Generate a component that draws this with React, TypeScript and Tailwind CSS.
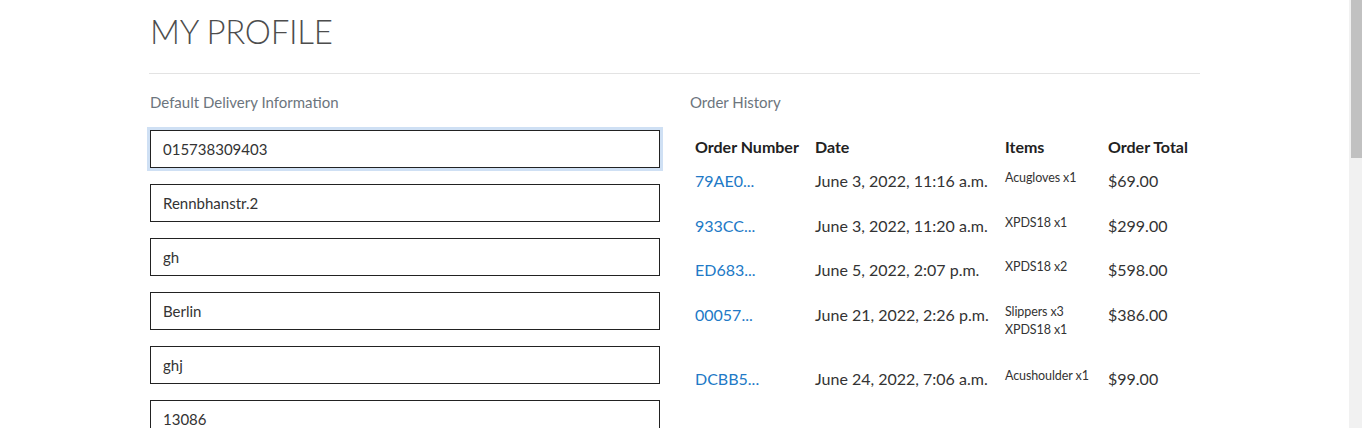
const orders = [
  { id: '79AE0...', date: 'June 3, 2022, 11:16 a.m.', items: ['Acugloves x1'], total: '$69.00', h: 'h-[45px]' },
  { id: '933CC...', date: 'June 3, 2022, 11:20 a.m.', items: ['XPDS18 x1'], total: '$299.00', h: 'h-[44px]' },
  { id: 'ED683...', date: 'June 5, 2022, 2:07 p.m.', items: ['XPDS18 x2'], total: '$598.00', h: 'h-[45px]' },
  { id: '00057...', date: 'June 21, 2022, 2:26 p.m.', items: ['Slippers x3', 'XPDS18 x1'], total: '$386.00', h: 'h-[64px]' },
  { id: 'DCBB5...', date: 'June 24, 2022, 7:06 a.m.', items: ['Acushoulder x1'], total: '$99.00', h: 'h-[45px]' },
];

const fields = ['015738309403', 'Rennbhanstr.2', 'gh', 'Berlin', 'ghj', '13086'];

export default function App() {
  return (
    <div className="flex h-[428px] w-full overflow-hidden bg-white font-['Lato','Noto_Sans',sans-serif]">
      <div className="flex-1 pl-[149px]">
        <div className="w-[1051px]">
          <h1 className="pt-[9px] pl-[1px] text-[33px] font-light leading-[44px] tracking-[-0.3px] text-[#4d4d4d]">MY PROFILE</h1>
          <hr className="mt-[20px] border-t border-[#e3e3e3]" />

          <div className="flex gap-[30px] pt-[18px]">
            {/* delivery info */}
            <div className="w-[511px] pl-[1px]">
              <p className="text-[15px] leading-[20px] text-[#6c757d]">Default Delivery Information</p>
              <div className="mt-[18px] flex flex-col gap-[16px]">
                {fields.map((v, i) => (
                  <input
                    key={i}
                    readOnly
                    value={v}
                    className={
                      'h-[38px] w-[510px] border border-[#222] px-[12px] text-[15px] text-[#333] outline-none ' +
                      (i === 0 ? 'shadow-[0_0_0_3px_#cfe0f4]' : '')
                    }
                  />
                ))}
              </div>
            </div>

            {/* order history */}
            <div className="w-[510px]">
              <p className="text-[15px] leading-[20px] text-[#6c757d]">Order History</p>
              <table className="mt-[23px] w-full table-fixed border-collapse text-left">
                <colgroup>
                  <col className="w-[120px]" />
                  <col className="w-[190px]" />
                  <col className="w-[103px]" />
                  <col />
                </colgroup>
                <thead>
                  <tr className="h-[34px] align-top">
                    <th className="pl-[5px] text-[16px] font-bold leading-[24px] text-[#222]">Order Number</th>
                    <th className="pl-[5px] text-[16px] font-bold leading-[24px] text-[#222]">Date</th>
                    <th className="pl-[5px] text-[16px] font-bold leading-[24px] text-[#222]">Items</th>
                    <th className="pl-[5px] text-[16px] font-bold leading-[24px] text-[#222]">Order Total</th>
                  </tr>
                </thead>
                <tbody>
                  {orders.map((o) => (
                    <tr key={o.id} className={o.h + ' align-top'}>
                      <td className="pl-[5px] text-[16px] leading-[24px] text-[#2179c6]">{o.id}</td>
                      <td className="pl-[5px] text-[16px] leading-[24px] text-[#333]">{o.date}</td>
                      <td className="pl-[5px] text-[12.5px] leading-[18px] tracking-[-0.1px] text-[#333]">
                        {o.items.map((it) => (
                          <div key={it}>{it}</div>
                        ))}
                      </td>
                      <td className="pl-[5px] text-[16px] leading-[24px] text-[#333]">{o.total}</td>
                    </tr>
                  ))}
                </tbody>
              </table>
            </div>
          </div>
        </div>
      </div>

      {/* scrollbar */}
      <div className="w-[13px] bg-[#f1f1f1] pl-[2px]">
        <div className="h-[158px] bg-[#c1c1c1]" />
      </div>
    </div>
  );
}
